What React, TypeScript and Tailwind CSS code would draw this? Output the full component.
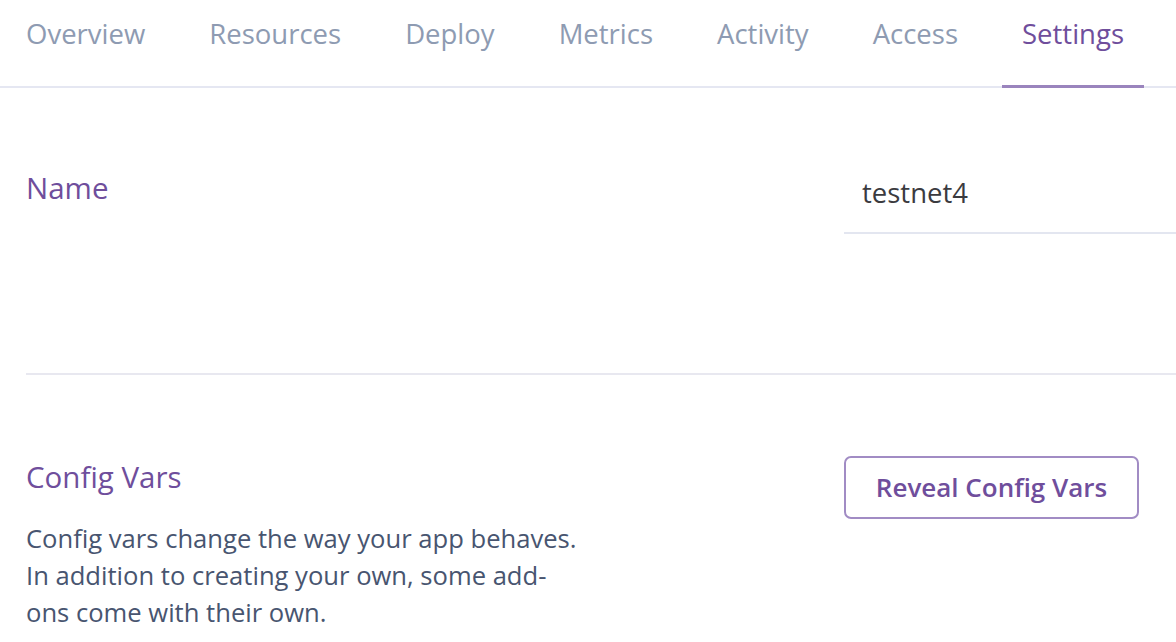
const TABS = ['Overview', 'Resources', 'Deploy', 'Metrics', 'Activity', 'Access', 'Settings']

export default function App() {
  const active = 'Settings'

  return (
    <div className="w-[1176px] h-[642px] overflow-hidden bg-white font-['Open_Sans',sans-serif]">
      {/* tab bar */}
      <nav className="flex h-[88px] border-b-2 border-[#e5e7f2] pl-[6px] gap-[24px]">
        {TABS.map(t => (
          <div
            key={t}
            className={`px-[20px] pt-[14px] text-[27.5px] leading-[40px] -mb-[2px] ${
              t === active ? 'text-[#6f4e9c] border-b-[3px] border-[#9a84bd]' : 'text-[#8e9bb2]'
            }`}
          >
            {t}
          </div>
        ))}
      </nav>

      <div className="pl-[26px]">
        {/* name row */}
        <section className="flex justify-between border-b-2 border-[#e8e8f0] h-[287px]">
          <h2 className="pt-[80px] text-[29.5px] leading-[40px] text-[#6f4e9c]">Name</h2>
          <div className="w-[332px] pt-[87px]">
            <div className="h-[59px] border-b-2 border-[#e3e6f0] pl-[18px] text-[27.5px] leading-[36px] text-[#3b3b3f]">
              testnet4
            </div>
          </div>
        </section>

        {/* config vars */}
        <section className="flex justify-between pt-[81px]">
          <div className="w-[600px] mt-[1px]">
            <h2 className="text-[29.5px] leading-[40px] text-[#6f4e9c]">Config Vars</h2>
            <p className="mt-[23px] text-[25.6px] leading-[37px] text-[#485570]">
              Config vars change the way your app behaves.
              <br />
              In addition to creating your own, some add-
              <br />
              ons come with their own.
            </p>
          </div>
          <div className="w-[332px]">
            <button className="w-[295px] h-[63px] rounded-[7px] border-2 border-[#a18cc4] text-[26px] font-semibold text-[#6f4e9c]">
              Reveal Config Vars
            </button>
          </div>
        </section>
      </div>
    </div>
  )
}
